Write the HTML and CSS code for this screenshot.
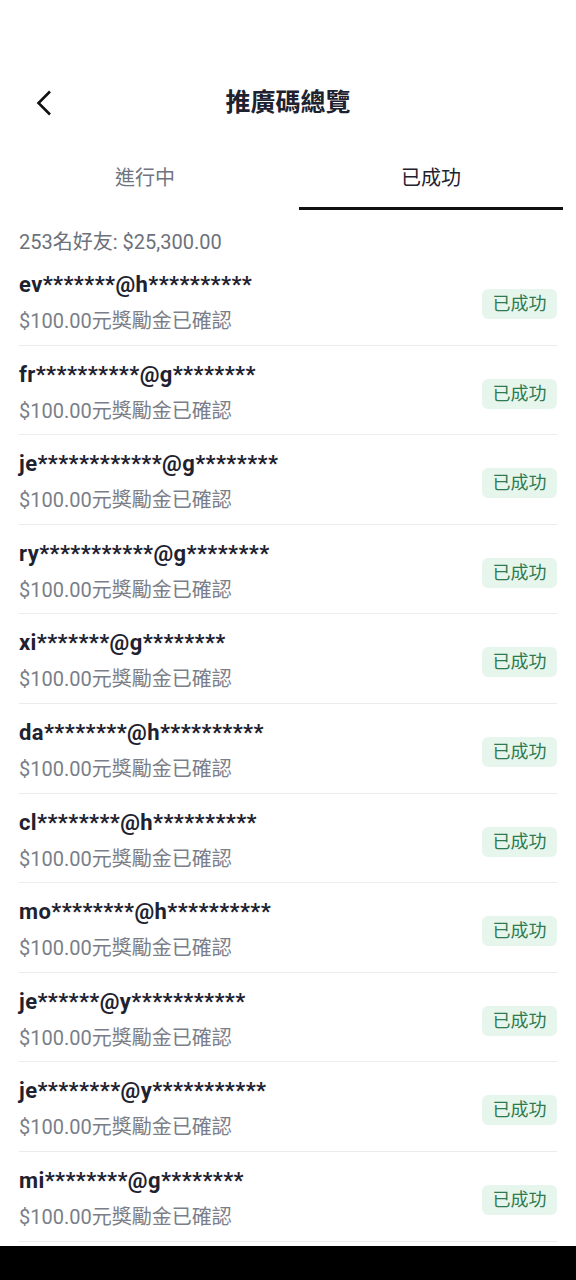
FILE: index.html
```html
<!DOCTYPE html>
<html lang="zh-Hant">

<head>
  <meta charset="UTF-8">
  <meta name="viewport" content="width=device-width, initial-scale=1.0">
  <title>推廣碼總覽</title>
  <link rel="stylesheet" href="styles.css">
</head>

<body>
  <!-- Header -->
  <header class="header">
    <button class="back" aria-label="返回">
      <svg width="16" height="26" viewBox="0 0 16 26">
        <polyline points="14,1.5 2.5,13 14,24.5" fill="none" stroke="#111" stroke-width="2.6" />
      </svg>
    </button>
    <h1 class="title">推廣碼總覽</h1>
  </header>

  <!-- Tabs -->
  <nav class="tabs">
    <div class="tab">進行中</div>
    <div class="tab active">已成功</div>
  </nav>

  <div class="summary">253名好友: $25,300.00</div>

  <!-- Referral list -->
  <ul class="list">
    <li class="row">
      <div class="info">
        <div class="email">ev*******@h**********</div>
        <div class="note">$100.00元獎勵金已確認</div>
      </div>
      <span class="badge">已成功</span>
    </li>
    <li class="row">
      <div class="info">
        <div class="email">fr**********@g********</div>
        <div class="note">$100.00元獎勵金已確認</div>
      </div>
      <span class="badge">已成功</span>
    </li>
    <li class="row">
      <div class="info">
        <div class="email">je************@g********</div>
        <div class="note">$100.00元獎勵金已確認</div>
      </div>
      <span class="badge">已成功</span>
    </li>
    <li class="row">
      <div class="info">
        <div class="email">ry***********@g********</div>
        <div class="note">$100.00元獎勵金已確認</div>
      </div>
      <span class="badge">已成功</span>
    </li>
    <li class="row">
      <div class="info">
        <div class="email">xi*******@g********</div>
        <div class="note">$100.00元獎勵金已確認</div>
      </div>
      <span class="badge">已成功</span>
    </li>
    <li class="row">
      <div class="info">
        <div class="email">da********@h**********</div>
        <div class="note">$100.00元獎勵金已確認</div>
      </div>
      <span class="badge">已成功</span>
    </li>
    <li class="row">
      <div class="info">
        <div class="email">cl********@h**********</div>
        <div class="note">$100.00元獎勵金已確認</div>
      </div>
      <span class="badge">已成功</span>
    </li>
    <li class="row">
      <div class="info">
        <div class="email">mo********@h**********</div>
        <div class="note">$100.00元獎勵金已確認</div>
      </div>
      <span class="badge">已成功</span>
    </li>
    <li class="row">
      <div class="info">
        <div class="email">je******@y***********</div>
        <div class="note">$100.00元獎勵金已確認</div>
      </div>
      <span class="badge">已成功</span>
    </li>
    <li class="row">
      <div class="info">
        <div class="email">je********@y***********</div>
        <div class="note">$100.00元獎勵金已確認</div>
      </div>
      <span class="badge">已成功</span>
    </li>
    <li class="row">
      <div class="info">
        <div class="email">mi********@g********</div>
        <div class="note">$100.00元獎勵金已確認</div>
      </div>
      <span class="badge">已成功</span>
    </li>
  </ul>

  <!-- System navigation bar -->
  <div class="navbar"></div>
</body>

</html>
```

FILE: styles.css
```css
body {
  margin: 0;
  font-family: Roboto, "Noto Sans CJK TC", sans-serif;
  background: #ffffff;
  color: #1e2230;
  height: 1280px;
  overflow: hidden;
}

.header {
  display: flex;
  align-items: center;
  justify-content: center;
  height: 50px;
  padding-top: 78px;
  margin-bottom: 12px;
}

.back {
  position: absolute;
  left: 36px;
  top: 90px;
  padding: 0;
  border: none;
  background: none;
  line-height: 0;
}

.title {
  margin: 0;
  font-size: 25px;
  font-weight: 700;
  line-height: 30px;
  color: #1e2230;
}

.tabs {
  display: flex;
  gap: 22px;
  padding: 0 13px;
}

.tab {
  flex: 1;
  text-align: center;
  font-size: 20px;
  line-height: 28px;
  padding: 24px 0 15px;
  color: #70747e;
  border-bottom: 3px solid transparent;
}

.tab.active {
  color: #1e2230;
  border-bottom-color: #111111;
}

.summary {
  margin: 18px 19px 0;
  font-size: 20px;
  line-height: 28px;
  color: #6d717b;
}

.list {
  list-style: none;
  margin: 0 19px;
  padding: 0;
}

.row {
  display: flex;
  align-items: center;
  justify-content: space-between;
  padding: 14px 0 8.6px;
  border-bottom: 1px solid #ececec;
}

.email {
  font-size: 22px;
  font-weight: 700;
  line-height: 30px;
  letter-spacing: 0.4px;
  color: #1e2230;
}

.note {
  margin-top: 6px;
  font-size: 20px;
  line-height: 30px;
  color: #7a7e88;
}

.badge {
  width: 75px;
  height: 30px;
  line-height: 30px;
  text-align: center;
  font-size: 18px;
  color: #2f7a50;
  background: #e7f6ed;
  border-radius: 6px;
  margin-top: 2px;
}

.navbar {
  position: fixed;
  left: 0;
  right: 0;
  bottom: 0;
  height: 34px;
  background: #000000;
}
```
